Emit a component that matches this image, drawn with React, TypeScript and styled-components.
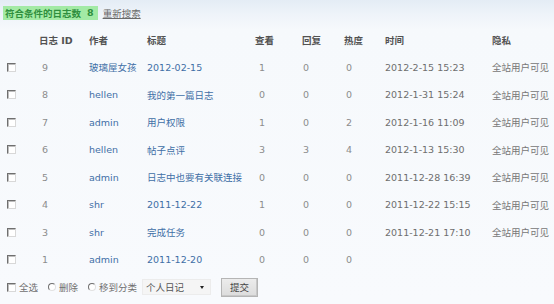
import React from "react";
import styled, { createGlobalStyle } from "styled-components";

const Global = createGlobalStyle`
  html, body { margin: 0; padding: 0; }
  body {
    width: 554px;
    height: 304px;
    overflow: hidden;
    background: linear-gradient(180deg, #e4ecf5 0px, #eef3f9 14px, #f6f9fc 30px, #f8fafd 100%);
    font-family: "DejaVu Sans", "Noto Sans CJK SC", sans-serif;
    font-size: 9.5px;
    color: #7c7c7c;
  }
`;

const Page = styled.div`
  display: flex;
  flex-direction: column;
  width: 554px;
`;

const TopBar = styled.div`
  display: flex;
  align-items: center;
  gap: 5px;
  height: 26px;
  padding-left: 3px;
  box-sizing: border-box;
  padding-bottom: 1px;
`;

const Badge = styled.span`
  display: inline-flex;
  align-items: center;
  gap: 6px;
  height: 14px;
  padding: 0 4px 0 2px;
  background: #a3eaa5;
  color: #2f8f3e;
  font-weight: bold;
  font-size: 9.5px;
`;

const ResetLink = styled.a`
  color: #6a6a6a;
  text-decoration: underline;
  font-size: 9.5px;
`;

const cols = "39px 50px 58px 108px 47px 42px 41px 107px 1fr";

const Row = styled.div<{ $head?: boolean }>`
  display: grid;
  grid-template-columns: ${cols};
  align-items: center;
  height: 27.5px;
  color: ${(p) => (p.$head ? "#525252" : "#8c8c8c")};
  font-weight: ${(p) => (p.$head ? "bold" : "normal")};
`;

const Cell = styled.div<{ $tone?: "blue" | "time" | "priv"; $pad?: number }>`
  padding-left: ${(p) => p.$pad ?? 0}px;
  white-space: nowrap;
  color: ${(p) =>
    p.$tone === "blue" ? "#3f6fa6" : p.$tone === "time" ? "#6e6e6e" : p.$tone === "priv" ? "#767676" : "inherit"};
`;

const CheckBox = styled.span`
  display: inline-block;
  width: 9px;
  height: 9px;
  box-sizing: border-box;
  border: 1px solid;
  border-color: #6f6f6f #d8d8d8 #d8d8d8 #6f6f6f;
  background: #fff;
  box-shadow: inset 1px 1px 0 #bdbdbd;
`;

const CheckCell = styled.div`
  padding-left: 7px;
  display: flex;
  align-items: center;
`;

const Radio = styled.span`
  display: inline-block;
  width: 8px;
  height: 8px;
  box-sizing: border-box;
  border-radius: 50%;
  border: 1px solid;
  border-color: #6f6f6f #e2e2e2 #e2e2e2 #6f6f6f;
  background: #fff;
`;

const Footer = styled.div`
  display: flex;
  align-items: center;
  height: 27px;
  padding-left: 7px;
  color: #707070;
`;

const Opt = styled.label`
  display: inline-flex;
  align-items: center;
  gap: 3px;
  margin-right: 10px;
`;

const SelectBox = styled.div`
  display: flex;
  align-items: center;
  justify-content: space-between;
  width: 69px;
  height: 16px;
  box-sizing: border-box;
  padding: 0 6px 0 3px;
  margin-left: -5px;
  background: #f5f5f5;
  border: 1px solid #ececec;
  color: #555;
`;

const Arrow = styled.span`
  width: 0;
  height: 0;
  border-left: 2px solid transparent;
  border-right: 2px solid transparent;
  border-top: 3px solid #222;
`;

const Submit = styled.button`
  margin-left: 10px;
  width: 37px;
  height: 19px;
  padding: 0;
  background: linear-gradient(180deg, #ececec, #dcdcdc);
  border: 1px solid #b5b5b5;
  box-shadow: inset -1px -1px 0 #c8c8c8;
  color: #444;
  font-family: "Noto Sans CJK SC", sans-serif;
  font-size: 9.5px;
`;

type Entry = {
  id: number;
  author: string;
  title: string;
  views: number;
  replies: number;
  heat: number;
  time?: string;
  privacy?: string;
};

const entries: Entry[] = [
  { id: 9, author: "玻璃屋女孩", title: "2012-02-15", views: 1, replies: 0, heat: 0, time: "2012-2-15 15:23", privacy: "全站用户可见" },
  { id: 8, author: "hellen", title: "我的第一篇日志", views: 0, replies: 0, heat: 0, time: "2012-1-31 15:24", privacy: "全站用户可见" },
  { id: 7, author: "admin", title: "用户权限", views: 1, replies: 0, heat: 2, time: "2012-1-16 11:09", privacy: "全站用户可见" },
  { id: 6, author: "hellen", title: "帖子点评", views: 3, replies: 3, heat: 4, time: "2012-1-13 15:30", privacy: "全站用户可见" },
  { id: 5, author: "admin", title: "日志中也要有关联连接", views: 0, replies: 0, heat: 0, time: "2011-12-28 16:39", privacy: "全站用户可见" },
  { id: 4, author: "shr", title: "2011-12-22", views: 1, replies: 0, heat: 0, time: "2011-12-22 15:15", privacy: "全站用户可见" },
  { id: 3, author: "shr", title: "完成任务", views: 0, replies: 0, heat: 0, time: "2011-12-21 17:10", privacy: "全站用户可见" },
  { id: 1, author: "admin", title: "2011-12-20", views: 0, replies: 0, heat: 0 },
];

export default function App() {
  return (
    <Page>
      <Global />
      <TopBar>
        <Badge>
          <span>符合条件的日志数</span>
          <span>8</span>
        </Badge>
        <ResetLink>重新搜索</ResetLink>
      </TopBar>
      <Row $head>
        <div />
        <Cell>日志 ID</Cell>
        <Cell>作者</Cell>
        <Cell>标题</Cell>
        <Cell>查看</Cell>
        <Cell>回复</Cell>
        <Cell>热度</Cell>
        <Cell>时间</Cell>
        <Cell>隐私</Cell>
      </Row>
      {entries.map((e) => (
        <Row key={e.id}>
          <CheckCell>
            <CheckBox />
          </CheckCell>
          <Cell $pad={3}>{e.id}</Cell>
          <Cell $tone="blue">{e.author}</Cell>
          <Cell $tone="blue">{e.title}</Cell>
          <Cell $pad={4}>{e.views}</Cell>
          <Cell $pad={1}>{e.replies}</Cell>
          <Cell $pad={2}>{e.heat}</Cell>
          <Cell $tone="time">{e.time ?? ""}</Cell>
          <Cell $tone="priv">{e.privacy ?? ""}</Cell>
        </Row>
      ))}
      <Footer>
        <Opt>
          <CheckBox />
          全选
        </Opt>
        <Opt>
          <Radio />
          删除
        </Opt>
        <Opt>
          <Radio />
          移到分类
        </Opt>
        <SelectBox>
          <span>个人日记</span>
          <Arrow />
        </SelectBox>
        <Submit>提交</Submit>
      </Footer>
    </Page>
  );
}
